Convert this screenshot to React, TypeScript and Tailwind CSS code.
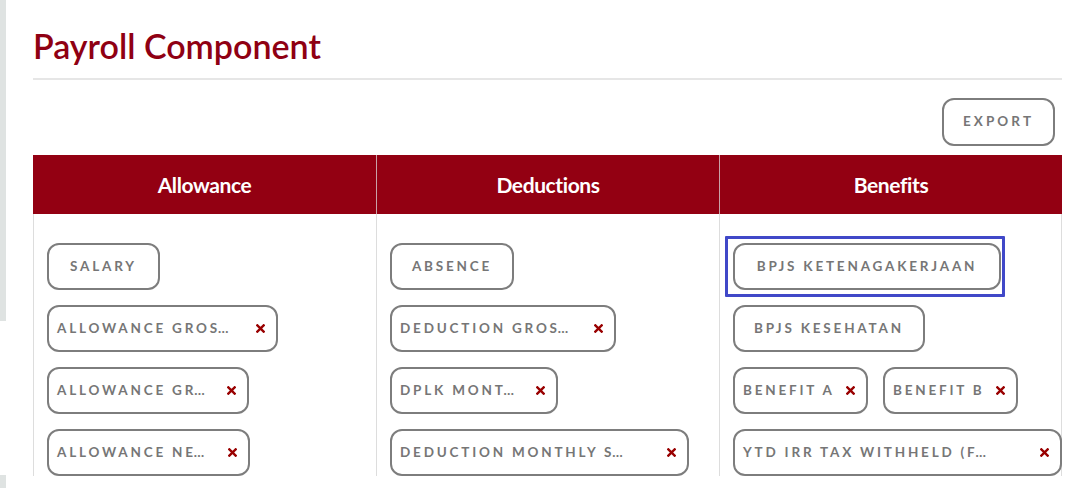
import { ReactNode } from "react";

interface ChipProps {
	label: string;
	removable?: boolean;
	width?: string;
}

const Label = ({ text }: { text: string }) => {
	// ellipsis gets no letter spacing, like a truncated label
	const cut = text.endsWith("…");
	const body = cut ? text.slice(0, -1) : text;
	return (
		<span className="whitespace-nowrap">
			{body}
			{cut && <span className="-ml-[2px] tracking-normal">…</span>}
		</span>
	);
};

const Chip = ({ label, removable, width }: ChipProps) => {
	if (!removable) {
		return (
			<div
				className={`inline-flex h-[47px] items-center justify-center whitespace-nowrap rounded-[12px] border-2 border-[#7d7d7d] bg-white px-[10px] pb-[1px] text-[13.5px] font-bold tracking-[2.8px] text-[#767676] ${width ?? ""}`}
			>
				{label}
			</div>
		);
	}
	return (
		<div
			className={`inline-flex h-[47px] items-center justify-between rounded-[12px] border-2 border-[#7d7d7d] bg-white pb-[1px] pl-[8px] pr-[11px] text-[13.5px] font-bold tracking-[2.8px] text-[#767676] ${width ?? ""}`}
		>
			<Label text={label} />
			<svg viewBox="0 0 10 10" className="h-[9px] w-[9px] shrink-0">
				<path
					d="M1.5 1.5 L8.5 8.5 M8.5 1.5 L1.5 8.5"
					stroke="#990000"
					strokeWidth="2.6"
					strokeLinecap="square"
				/>
			</svg>
		</div>
	);
};

const Column = ({ children, last }: { children: ReactNode; last?: boolean }) => (
	<div
		className={`flex flex-col items-start gap-[15px] border-l border-[#dddddd] px-[13px] pt-[29px] ${last ? "border-r" : ""}`}
	>
		{children}
	</div>
);

const App = () => {
	return (
		<div
			className="flex h-[488px] w-[1079px] overflow-hidden bg-white"
			style={{ fontFamily: "Lato, 'Open Sans', sans-serif" }}
		>
			{/* left strip */}
			<div className="flex w-[6px] flex-col">
				<div className="h-[321px] bg-[#dfe3e2]" />
				<div className="h-[154px]" />
				<div className="flex-1 bg-[#dfe3e2]" />
			</div>

			<div className="ml-[27px] w-[1029px]">
				<h1 className="pt-[25px] text-[34px] leading-[41px] font-semibold text-[#8f0013]">
					Payroll Component
				</h1>
				<div className="mt-[12px] h-[2px] bg-[#e6e6e6]" />

				<div className="flex justify-end pt-[18px] pr-[7px]">
					<button className="h-[48px] w-[113px] rounded-[12px] border-2 border-[#7d7d7d] bg-white pb-[2px] text-[13.5px] font-bold tracking-[3.1px] text-[#767676]">
						EXPORT
					</button>
				</div>

				<div className="mt-[9px] grid grid-cols-[343px_343px_343px]">
					<div className="flex h-[59px] items-center justify-center bg-[#930012] text-[21px] font-bold tracking-[-0.4px] text-white">
						Allowance
					</div>
					<div className="flex h-[59px] items-center justify-center border-l border-[#c9a2a7] bg-[#930012] text-[21px] font-bold tracking-[-0.4px] text-white">
						Deductions
					</div>
					<div className="flex h-[59px] items-center justify-center border-l border-[#c9a2a7] bg-[#930012] text-[21px] font-bold tracking-[-0.4px] text-white">
						Benefits
					</div>

					<Column>
						<Chip label="SALARY" width="w-[113px]" />
						<Chip label="ALLOWANCE GROS…" removable width="w-[231px]" />
						<Chip label="ALLOWANCE GR…" removable width="w-[202px]" />
						<Chip label="ALLOWANCE NE…" removable width="w-[203px]" />
					</Column>
					<Column>
						<Chip label="ABSENCE" width="w-[124px]" />
						<Chip label="DEDUCTION GROS…" removable width="w-[226px]" />
						<Chip label="DPLK MONT…" removable width="w-[168px]" />
						<Chip label="DEDUCTION MONTHLY S…" removable width="w-[299px]" />
					</Column>
					<Column last>
						<div className="-mt-[7px] -ml-[8px] -mb-[7px] rounded-[1px] border-[3px] border-[#4048c8] pt-[4px] pr-[1px] pb-[4px] pl-[5px]">
							<Chip label="BPJS KETENAGAKERJAAN" width="w-[268px]" />
						</div>
						<Chip label="BPJS KESEHATAN" width="w-[192px]" />
						<div className="flex gap-[15px]">
							<Chip label="BENEFIT A" removable width="w-[135px]" />
							<Chip label="BENEFIT B" removable width="w-[135px]" />
						</div>
						<Chip label="YTD IRR TAX WITHHELD (F…" removable width="w-[329px]" />
					</Column>
				</div>
			</div>
		</div>
	);
};

export default App;
